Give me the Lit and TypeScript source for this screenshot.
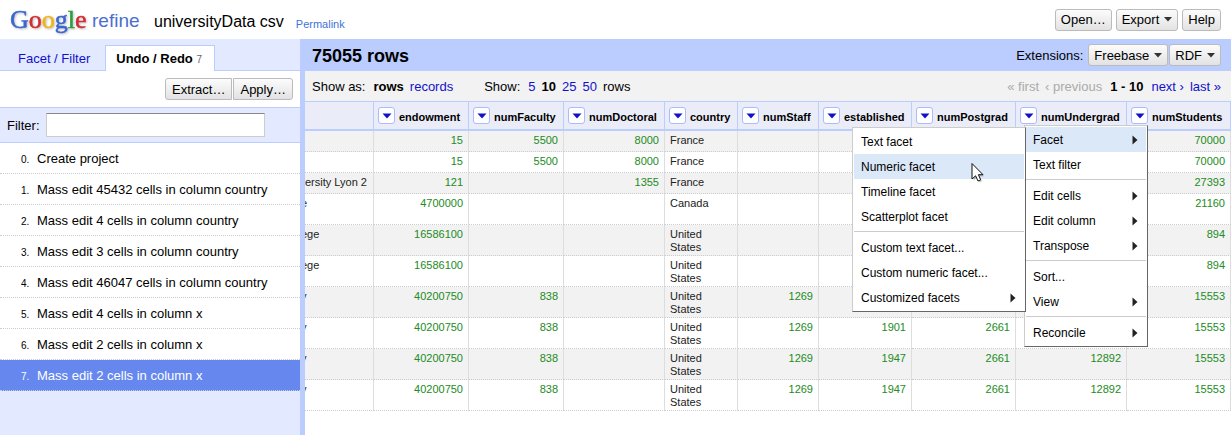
import { LitElement, html, css, nothing, svg } from "lit";
import { customElement, property } from "lit/decorators.js";
import { classMap } from "lit/directives/class-map.js";
import { styleMap } from "lit/directives/style-map.js";

interface MenuEntry {
  label?: string;
  separator?: boolean;
  submenu?: boolean;
  active?: boolean;
  children?: MenuEntry[];
  pointer?: boolean;
}

interface Column {
  name: string;
  width: number;
  text?: boolean;
  menuOpen?: boolean;
}

const SEPARATOR: MenuEntry = { separator: true };

const FACET_MENU: MenuEntry[] = [
  { label: "Text facet" },
  { label: "Numeric facet", active: true, pointer: true },
  { label: "Timeline facet" },
  { label: "Scatterplot facet" },
  SEPARATOR,
  { label: "Custom text facet..." },
  { label: "Custom numeric facet..." },
  { label: "Customized facets", submenu: true },
];

const COLUMN_MENU: MenuEntry[] = [
  { label: "Facet", submenu: true, active: true, children: FACET_MENU },
  { label: "Text filter" },
  SEPARATOR,
  { label: "Edit cells", submenu: true },
  { label: "Edit column", submenu: true },
  { label: "Transpose", submenu: true },
  SEPARATOR,
  { label: "Sort..." },
  { label: "View", submenu: true },
  SEPARATOR,
  { label: "Reconcile", submenu: true },
];

const COLUMNS: Column[] = [
  { name: "endowment", width: 95 },
  { name: "numFaculty", width: 95 },
  { name: "numDoctoral", width: 101 },
  { name: "country", width: 73, text: true },
  { name: "numStaff", width: 81 },
  { name: "established", width: 93 },
  { name: "numPostgrad", width: 104 },
  { name: "numUndergrad", width: 111, menuOpen: true },
  { name: "numStudents", width: 104 },
];

const ROWS: string[][] = [
  ["", "15", "5500", "8000", "France", "", "", "", "", "70000"],
  ["", "15", "5500", "8000", "France", "", "", "", "", "70000"],
  ["ersity Lyon 2", "121", "", "1355", "France", "", "", "", "", "27393"],
  ["e", "4700000", "", "", "Canada", "", "", "", "", "21160"],
  ["ege", "16586100", "", "", "United States", "", "", "", "", "894"],
  ["ege", "16586100", "", "", "United States", "", "", "", "", "894"],
  ["y", "40200750", "838", "", "United States", "1269", "", "", "", "15553"],
  ["y", "40200750", "838", "", "United States", "1269", "1901", "2661", "", "15553"],
  ["y", "40200750", "838", "", "United States", "1269", "1947", "2661", "12892", "15553"],
  ["y", "40200750", "838", "", "United States", "1269", "1947", "2661", "12892", "15553"],
];

const HISTORY = [
  "Create project",
  "Mass edit 45432 cells in column country",
  "Mass edit 4 cells in column country",
  "Mass edit 3 cells in column country",
  "Mass edit 46047 cells in column country",
  "Mass edit 4 cells in column x",
  "Mass edit 2 cells in column x",
  "Mass edit 2 cells in column x",
];

const caret = html`<svg class="caret" width="8" height="5" viewBox="0 0 8 5" aria-hidden="true">
  ${svg`<path d="M0 0H8L4 4.5Z" fill="#333"/>`}
</svg>`;

const buttonStyles = css`
  button {
    font: inherit;
    color: #000;
  }
  .btn {
    display: inline-flex;
    align-items: center;
    height: 22px;
    padding: 0 5px;
    border: 1px solid #bbb;
    border-radius: 3px;
    background: linear-gradient(#fcfcfc, #e2e2e2);
    white-space: nowrap;
    box-sizing: border-box;
  }
  .caret {
    margin-left: 5px;
  }
  a {
    color: #11c;
    text-decoration: none;
  }
`;

@customElement("refine-menu")
export class RefineMenu extends LitElement {
  @property({ attribute: false }) entries: MenuEntry[] = [];

  static styles = css`
    :host {
      display: block;
      box-sizing: border-box;
      padding: 1px;
      background: #fff;
      border: 1px solid;
      border-color: #ccc #666 #666 #ccc;
      font-size: 12px;
      font-weight: normal;
      text-align: left;
    }
    .entry {
      position: relative;
    }
    .item {
      display: flex;
      align-items: center;
      justify-content: space-between;
      width: 100%;
      height: 25px;
      padding: 0 8px 0 7px;
      border: 0;
      background: none;
      font: inherit;
      color: #000;
      white-space: nowrap;
    }
    .item.active {
      background: #dbe8f8;
    }
    .separator {
      height: 1px;
      margin: 2px 0 3px;
      border: 0;
      background: #ccc;
    }
    .sub {
      position: absolute;
      top: 0;
      right: 100%;
      width: 174px;
      z-index: 2;
    }
    .pointer {
      position: absolute;
      left: 117px;
      top: 8px;
    }
  `;

  render() {
    return this.entries.map((entry) =>
      entry.separator
        ? html`<hr class="separator" />`
        : html`<div class="entry">
            <button class=${classMap({ item: true, active: !!entry.active })}>
              <span>${entry.label}</span>
              ${entry.submenu
                ? html`<svg width="6" height="10" viewBox="0 0 6 10" aria-hidden="true">
                    <path d="M0.5 0.5V9.5L5.5 5Z" fill="#222" />
                  </svg>`
                : nothing}
            </button>
            ${entry.children
              ? html`<refine-menu class="sub" .entries=${entry.children}></refine-menu>`
              : nothing}
            ${entry.pointer
              ? html`<svg class="pointer" width="14" height="22" viewBox="0 0 14 22" aria-hidden="true">
                  <path d="M2.5 3V18.5L6 15.2L8.4 20.5L11 19.3L8.7 14.2H13.2Z" fill="#000" opacity=".22" />
                  <path d="M1 1.5V17L4.6 13.8L7 19L9.7 17.8L7.4 12.7H12Z" fill="#fff" stroke="#111" />
                </svg>`
              : nothing}
          </div>`
    );
  }
}

@customElement("refine-history")
export class RefineHistory extends LitElement {
  static styles = [
    buttonStyles,
    css`
      :host {
        display: block;
        background: #e3e9ff;
      }
      .tabs {
        display: flex;
        align-items: flex-end;
        gap: 4px;
        height: 32px;
        padding-left: 7px;
        box-sizing: border-box;
        border-bottom: 1px solid #bbccff;
      }
      .tab {
        box-sizing: border-box;
        height: 26px;
        padding: 0 10px;
        line-height: 26px;
        margin-bottom: -1px;
        border: 1px solid transparent;
        border-bottom: 0;
      }
      .tab.selected {
        padding-right: 12px;
        background: #fff;
        border-color: #bbccff;
        color: #000;
        font-weight: bold;
      }
      .count {
        font-size: 10px;
        font-weight: normal;
        color: #666;
      }
      .actions {
        display: flex;
        justify-content: flex-end;
        gap: 1px;
        padding: 7px 7px 7px 0;
        background: #fff;
        border-bottom: 1px solid #bbccff;
      }
      .actions .btn {
        padding: 0 6px;
      }
      .actions .btn:first-child {
        border-radius: 3px 0 0 3px;
      }
      .actions .btn:last-child {
        border-radius: 0 3px 3px 0;
      }
      .filter {
        display: flex;
        align-items: center;
        gap: 6px;
        height: 34px;
        padding-left: 7px;
        border-bottom: 1px solid #bbccff;
      }
      input {
        width: 219px;
        height: 24px;
        box-sizing: border-box;
        padding: 0 4px;
        border: 1px solid #ccc;
        border-top-color: #888;
        background: #fff;
        font: inherit;
      }
      ol {
        margin: 0;
        padding: 0;
        list-style: none;
      }
      .step {
        display: flex;
        align-items: baseline;
        gap: 7px;
        height: 30px;
        line-height: 32px;
        padding-left: 21px;
        background: #fff;
        border-bottom: 1px dotted #ccc;
        color: #000;
      }
      .step.current {
        background: #6688ee;
        color: #fff;
      }
      .number {
        min-width: 9px;
        font-size: 10px;
      }
    `,
  ];

  render() {
    const last = HISTORY.length - 1;
    return html`
      <nav class="tabs">
        <a class="tab" href="#facets">Facet / Filter</a>
        <a class="tab selected" href="#history">Undo / Redo <span class="count">${last}</span></a>
      </nav>
      <div class="actions">
        <button class="btn">Extract…</button>
        <button class="btn">Apply…</button>
      </div>
      <div class="filter">
        <label for="filter">Filter:</label>
        <input id="filter" type="text" />
      </div>
      <ol>
        ${HISTORY.map(
          (label, i) => html`<li>
            <a href="#step" class=${classMap({ step: true, current: i === last })}>
              <span class="number">${i}.</span><span>${label}</span>
            </a>
          </li>`
        )}
      </ol>
    `;
  }
}

@customElement("refine-grid")
export class RefineGrid extends LitElement {
  static styles = css`
    :host {
      display: block;
    }
    table {
      width: 100%;
      table-layout: fixed;
      border-collapse: separate;
      border-spacing: 0;
      font-size: 11px;
    }
    th {
      height: 27px;
      padding: 0;
      background: #eaecf8;
      border-right: 1px solid #bbccff;
      border-bottom: 2px solid #bbccff;
      vertical-align: top;
    }
    .head {
      position: relative;
      display: flex;
      align-items: center;
      gap: 4px;
      height: 27px;
      padding-left: 4px;
      white-space: nowrap;
    }
    .name {
      padding-top: 3px;
    }
    .drop {
      display: flex;
      align-items: center;
      justify-content: center;
      flex: none;
      width: 17px;
      height: 17px;
      box-sizing: border-box;
      padding: 0;
      border: 1px solid #aabbff;
      border-radius: 3px;
      background: #fff;
    }
    .menu {
      position: absolute;
      left: 8px;
      top: 23px;
      width: 124px;
      z-index: 1;
    }
    td {
      padding: 3px 5px 4px;
      line-height: 13px;
      height: 13px;
      vertical-align: top;
      text-align: right;
      color: #228b22;
      border-right: 1px solid #ddd;
      border-bottom: 1px dotted #ccc;
    }
    tbody tr:nth-child(odd) {
      background: #f2f2f2;
    }
    .text {
      padding-right: 20px;
      text-align: left;
      color: #222;
    }
    .clipped {
      padding-left: 0;
      overflow: hidden;
      white-space: nowrap;
      text-align: left;
      color: #222;
    }
    .tall td {
      height: 26px;
      padding-bottom: 1px;
    }
    .tall .clipped {
      text-indent: -4px;
    }
  `;

  render() {
    return html`<table>
      <colgroup>
        <col />
        ${COLUMNS.map((col) => html`<col style=${styleMap({ width: `${col.width}px` })} />`)}
      </colgroup>
      <thead>
        <tr>
          <th></th>
          ${COLUMNS.map(
            (col) => html`<th scope="col">
              <div class="head">
                <button class="drop" aria-label="${col.name} menu">
                  <svg width="10" height="6" viewBox="0 0 10 6" aria-hidden="true">
                    <path d="M0.5 0.5H9.5L5 5.5Z" fill="#11c" />
                  </svg>
                </button>
                <span class="name">${col.name}</span>
                ${col.menuOpen
                  ? html`<refine-menu class="menu" .entries=${COLUMN_MENU}></refine-menu>`
                  : nothing}
              </div>
            </th>`
          )}
        </tr>
      </thead>
      <tbody>
        ${ROWS.map(
          (row, r) => html`<tr class=${classMap({ tall: r > 2 })}>
            ${row.map(
              (value, i) => html`<td
                class=${classMap({ clipped: i === 0, text: i > 0 && !!COLUMNS[i - 1].text })}
              >${value}</td>`
            )}
          </tr>`
        )}
      </tbody>
    </table>`;
  }
}

@customElement("app-root")
export class AppRoot extends LitElement {
  static styles = [
    buttonStyles,
    css`
      :host {
        display: flex;
        flex-direction: column;
        min-height: 100vh;
        background: #fff;
        color: #000;
        font-family: "Liberation Sans", Arial, sans-serif;
        font-size: 13px;
      }
      header {
        display: flex;
        align-items: center;
        height: 39px;
        padding: 0 10px;
      }
      .logo {
        display: block;
        flex: none;
      }
      .google {
        filter: drop-shadow(1px 1px 1px rgba(0, 0, 0, 0.25));
      }
      .project {
        margin: 0 12px 0 11px;
        padding-top: 5px;
        font-size: 16px;
        font-weight: normal;
      }
      .permalink {
        padding-top: 8px;
        font-size: 11px;
        color: #4272db;
      }
      .buttons {
        display: flex;
        gap: 4px;
        margin-left: auto;
      }
      main {
        display: flex;
        flex: 1;
      }
      .left {
        flex: none;
        width: 300px;
      }
      .right {
        flex: 1;
        min-width: 0;
        border-left: 5px solid #bbccff;
      }
      .summary {
        display: flex;
        align-items: center;
        height: 32px;
        padding: 0 10px 0 7px;
        background: #bbccff;
      }
      .summary h2 {
        margin: 0;
        padding-top: 3px;
        font-size: 18px;
      }
      .extensions {
        display: flex;
        align-items: center;
        gap: 1px;
        margin-left: auto;
      }
      .extensions span {
        margin-right: 4px;
      }
      .controls {
        display: flex;
        align-items: center;
        height: 30px;
        padding: 0 10px 0 7px;
        background: #f2f2f2;
        border-bottom: 1px solid #bbccff;
        white-space: nowrap;
      }
      .group {
        display: flex;
        gap: 6px;
      }
      .group .label {
        margin-right: 2px;
      }
      .sizes {
        margin-left: 31px;
      }
      .pager {
        margin-left: auto;
      }
      .pager b {
        margin: 0 2px;
      }
      .off {
        color: #aaa;
      }
    `,
  ];

  render() {
    return html`
      <header>
        <svg class="logo" width="133" height="39" viewBox="0 0 133 39" role="img" aria-label="Google refine">
          <text class="google" x="0" y="28" font-family="Liberation Serif" font-size="26" stroke-width=".5">
            <tspan fill="#3c66cf" stroke="#3c66cf">G</tspan><tspan fill="#d02e35" stroke="#d02e35">o</tspan><tspan fill="#f0b51b" stroke="#f0b51b">o</tspan><tspan fill="#3c66cf" stroke="#3c66cf">g</tspan><tspan fill="#28a03c" stroke="#28a03c">l</tspan><tspan fill="#d02e35" stroke="#d02e35">e</tspan>
          </text>
          <text x="82" y="27" font-family="Liberation Sans" font-size="19" fill="#4a6fcf">refine</text>
        </svg>
        <h1 class="project">universityData csv</h1>
        <a class="permalink" href="#permalink">Permalink</a>
        <div class="buttons">
          <button class="btn">Open…</button>
          <button class="btn">Export ${caret}</button>
          <button class="btn">Help</button>
        </div>
      </header>
      <main>
        <refine-history class="left"></refine-history>
        <section class="right">
          <div class="summary">
            <h2>75055 rows</h2>
            <div class="extensions">
              <span>Extensions:</span>
              <button class="btn">Freebase ${caret}</button>
              <button class="btn">RDF ${caret}</button>
            </div>
          </div>
          <div class="controls">
            <div class="group">
              <span class="label">Show as:</span><b>rows</b><a href="#records">records</a>
            </div>
            <div class="group sizes">
              <span class="label">Show:</span><a href="#5">5</a><b>10</b><a href="#25">25</a><a href="#50">50</a><span>rows</span>
            </div>
            <div class="group pager">
              <span class="off">« first</span><span class="off">‹ previous</span><b>1 - 10</b><a href="#next">next ›</a><a href="#last">last »</a>
            </div>
          </div>
          <refine-grid></refine-grid>
        </section>
      </main>
    `;
  }
}
